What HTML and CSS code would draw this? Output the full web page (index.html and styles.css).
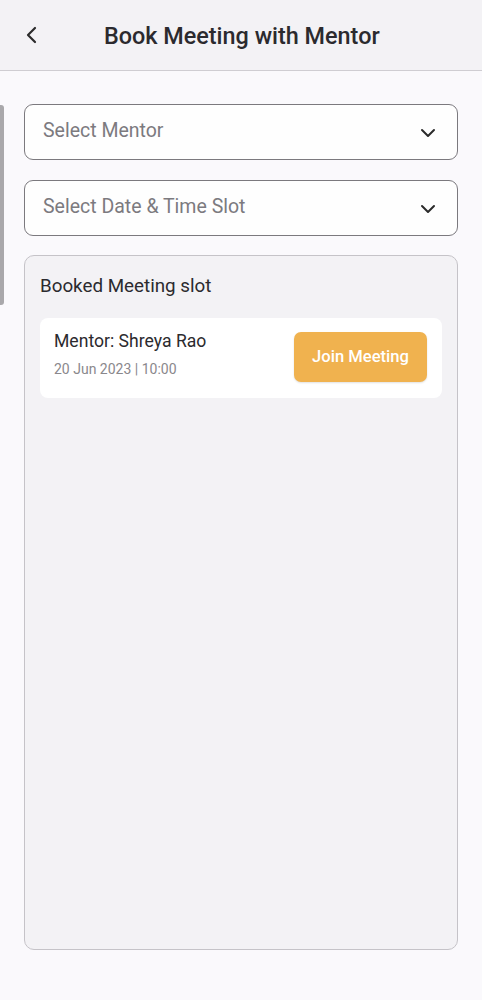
FILE: index.html
```html
<!DOCTYPE html>
<html>
<head>
<meta charset="utf-8">
<link rel="stylesheet" href="styles.css">
</head>
<body>
<div class="scrollbar"></div>
<header class="appbar">
  <div class="back">
    <svg width="16" height="18" viewBox="0 0 16 18"><path d="M10 2 L3 9 L10 16" fill="none" stroke="#2b2b2b" stroke-width="2.2" stroke-linecap="round" stroke-linejoin="round"/></svg>
  </div>
  <h1 class="title">Book Meeting with Mentor</h1>
</header>
<main class="content">
  <div class="select">
    <span class="placeholder">Select Mentor</span>
    <svg class="chev" width="18" height="12" viewBox="0 0 18 12"><path d="M3 3 L9 9 L15 3" fill="none" stroke="#2b2b2b" stroke-width="2" stroke-linecap="round" stroke-linejoin="round"/></svg>
  </div>
  <div class="select">
    <span class="placeholder">Select Date &amp; Time Slot</span>
    <svg class="chev" width="18" height="12" viewBox="0 0 18 12"><path d="M3 3 L9 9 L15 3" fill="none" stroke="#2b2b2b" stroke-width="2" stroke-linecap="round" stroke-linejoin="round"/></svg>
  </div>
  <section class="booked">
    <h2 class="booked-title">Booked Meeting slot</h2>
    <div class="slot">
      <div class="slot-info">
        <div class="mentor">Mentor: Shreya Rao</div>
        <div class="when">20 Jun 2023 | 10:00</div>
      </div>
      <button class="join">Join Meeting</button>
    </div>
  </section>
</main>
</body>
</html>
```
FILE: styles.css
```css
* { box-sizing: border-box; }
html, body { margin: 0; padding: 0; }
body {
  width: 482px;
  height: 1000px;
  background: #faf9fc;
  font-family: Roboto, "Liberation Sans", sans-serif;
  position: relative;
  overflow: hidden;
}
.scrollbar {
  position: absolute;
  left: 0;
  top: 105px;
  width: 4px;
  height: 200px;
  background: #a9a8ab;
  border-radius: 0 3px 3px 0;
}
.appbar {
  height: 71px;
  background: #f3f2f5;
  border-bottom: 1px solid #cfcdd2;
  display: flex;
  align-items: center;
  padding-left: 25px;
}
.back {
  width: 16px;
  height: 18px;
  display: flex;
  margin-top: 0;
}
.title {
  margin: 1px 0 0 63px;
  font-size: 23.4px;
  font-weight: 500;
  color: #2b2a2e;
}
.content {
  padding: 33px 24px 0 24px;
  display: flex;
  flex-direction: column;
}
.select {
  height: 56px;
  border: 1px solid #7b797e;
  border-radius: 9px;
  background: #fefefe;
  display: flex;
  align-items: center;
  justify-content: space-between;
  padding: 0 20px 0 18px;
  margin-bottom: 20px;
}
.select + .select { margin-bottom: 19px; }
.placeholder {
  font-size: 19.5px;
  color: #7c7a7f;
  margin-top: -4px;
}
.chev { margin-top: 1px; }
.booked {
  height: 695px;
  background: #f3f2f5;
  border: 1px solid #c5c3c8;
  border-radius: 10px;
  padding: 19px 15px;
}
.booked-title {
  margin: 0;
  font-size: 18.8px;
  font-weight: 400;
  color: #2b2a2e;
  line-height: 22px;
}
.slot {
  margin-top: 21px;
  height: 80px;
  background: #ffffff;
  border-radius: 8px;
  display: flex;
  align-items: center;
  justify-content: space-between;
  padding: 0 15px 0 14px;
}
.slot-info { margin-top: -8px; }
.mentor {
  font-size: 17.6px;
  color: #2b2a2e;
  line-height: 20px;
}
.when {
  margin-top: 10px;
  font-size: 14px;
  color: #8a888c;
  line-height: 16px;
}
.join {
  width: 133px;
  height: 50px;
  border: none;
  border-radius: 7px;
  background: #f0b24f;
  color: #ffffff;
  font-family: Roboto, "Liberation Sans", sans-serif;
  font-size: 16.6px;
  font-weight: 500;
  margin-top: -3px;
  box-shadow: 0 1px 2px rgba(0,0,0,0.12);
}
```
